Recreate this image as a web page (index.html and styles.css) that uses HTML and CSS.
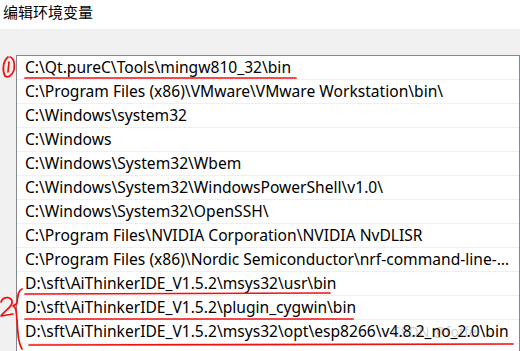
FILE: index.html
```html
<!DOCTYPE html>
<html lang="zh">

<head>
    <meta charset="UTF-8">
    <title>编辑环境变量</title>
    <link rel="stylesheet" href="styles.css">
</head>

<body>
    <div class="dlg_title">编辑环境变量</div>
    <div class="dlg_body">
        <div class="path_list">
            <div class="path_row">C:\Qt.pureC\Tools\mingw810_32\bin</div>
            <div class="path_row">C:\Program Files (x86)\VMware\VMware Workstation\bin\</div>
            <div class="path_row">C:\Windows\system32</div>
            <div class="path_row">C:\Windows</div>
            <div class="path_row">C:\Windows\System32\Wbem</div>
            <div class="path_row">C:\Windows\System32\WindowsPowerShell\v1.0\</div>
            <div class="path_row">C:\Windows\System32\OpenSSH\</div>
            <div class="path_row">C:\Program Files\NVIDIA Corporation\NVIDIA NvDLISR</div>
            <div class="path_row">C:\Program Files (x86)\Nordic Semiconductor\nrf-command-line-tools\bin\</div>
            <div class="path_row">D:\sft\AiThinkerIDE_V1.5.2\msys32\usr\bin</div>
            <div class="path_row">D:\sft\AiThinkerIDE_V1.5.2\plugin_cygwin\bin</div>
            <div class="path_row">D:\sft\AiThinkerIDE_V1.5.2\msys32\opt\esp8266\v4.8.2_no_2.0\bin</div>
        </div>
    </div>

    <!-- red pen marks drawn over the list -->
    <svg class="pen_marks" width="520" height="351" viewBox="0 0 520 351">
        <g fill="none" stroke="#f01010" stroke-width="1.7" stroke-linecap="round" stroke-linejoin="round">
            <path d="M8 57 C3 61 2 70 5 76 C8 78 12 76 14 70 C15 64 14 58 10 57"/>
            <path d="M9 62 L8 72"/>
            <path d="M25 78 L296 78"/>
            <path d="M25 294 L330 293"/>
            <path d="M25 319 L353 319"/>
            <path d="M29 345 L513 344"/>
            <path d="M1 302 C3 296 13 296 12 303 C11 308 4 311 1 316 L13 314"/>
            <path d="M22 289 C17 291 18 298 17 303 C16 305 14 305 13 306 C17 307 16 312 17 320 C18 334 18 342 22 349"/>
        </g>
    </svg>
    <div class="watermark">CSDN @fotfei</div>
</body>

</html>
```

FILE: styles.css
```css
body {
    margin: 0px;
    width: 520px;
    height: 351px;
    overflow: hidden;
    background-color: white;
    font-family: "Noto Sans", "Noto Sans CJK SC", sans-serif;
    color: black;
}

.dlg_title {
    height: 29px;
    padding-left: 3px;
    font-size: 15px;
    line-height: 24px;
    font-family: "Noto Sans CJK SC", sans-serif;
}

.dlg_body {
    background-color: #f0f0f0;
    height: 322px;
    padding-top: 26px;
    padding-left: 16px;
    box-sizing: border-box;
}

.path_list {
    background-color: white;
    border: 1px solid #828790;
    border-bottom: none;
    height: 296px;
}

.path_row {
    height: 24px;
    line-height: 23px;
    padding-left: 8px;
    padding-right: 9px;
    border-bottom: 1px solid #f0f0f0;
    box-sizing: border-box;
    font-size: 15.6px;
    white-space: nowrap;
    overflow: hidden;
    text-overflow: ellipsis;
}

.pen_marks {
    position: absolute;
    left: 0px;
    top: 0px;
}

.watermark {
    position: absolute;
    left: 392px;
    top: 322px;
    font-size: 14px;
    color: rgba(90, 90, 90, 0.3);
}
```
